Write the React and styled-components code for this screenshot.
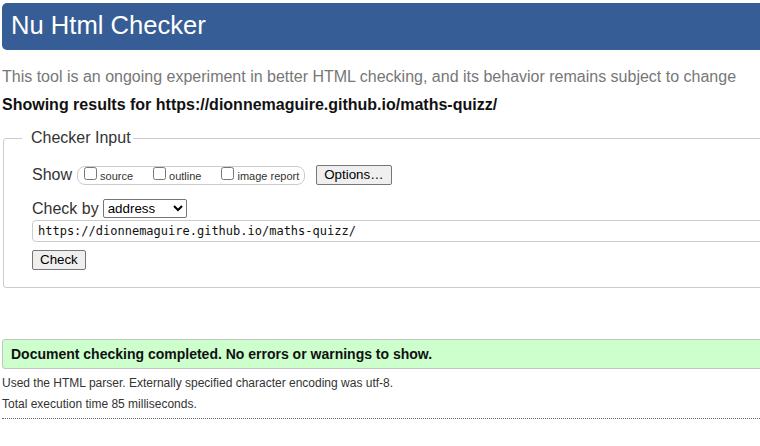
import React from 'react'
import styled, { createGlobalStyle } from 'styled-components'

const GlobalStyle = createGlobalStyle`
html, body {
  margin: 0;
  padding: 0;
  overflow: hidden;
  background: #fff;
}
body {
  font-family: "Liberation Sans", Arial, sans-serif;
  font-size: 16px;
  color: #222;
}
`

const Page = styled.div`
width: 820px;
padding: 3px 0 0 2px;
`

const Header = styled.h1`
box-sizing: border-box;
height: 47px;
margin: 0;
padding: 8px 0 0 9px;
background-color: #365d95;
border-radius: 5px 0 0 5px;
color: #fff;
font-weight: 400;
font-size: 25.6px;
line-height: 29px;
`

const Intro = styled.p`
margin: 18px 0 0 0;
line-height: 18px;
color: #777;
`

const Results = styled.p`
margin: 10px 0 0 0;
line-height: 18px;
font-weight: 700;
color: #111;
`

const Fieldset = styled.fieldset`
margin: 15px 0 0 1px;
padding: 18px 0 17px 28px;
border: 1px solid #ccc;
border-radius: 3px;
color: #333;
display: flex;
flex-direction: column;
`

const Legend = styled.legend`
margin-left: -10px;
padding: 0 2px 0 9px;
line-height: 18px;
font-size: 16px;
`

const Row = styled.div`
display: flex;
align-items: center;
height: ${p => p.$h}px;
margin-top: ${p => p.$gap || 0}px;
line-height: 18px;
`

const Label = styled.span`
margin-right: ${p => p.$space}px;
`

const Group = styled.div`
box-sizing: border-box;
display: flex;
align-items: flex-start;
gap: 16px;
height: 19px;
padding: 0 5px 1px 2px;
border: 1px solid #ccc;
border-radius: 8px;
margin-right: 11px;
`

const Option = styled.label`
display: flex;
align-items: flex-start;
font-size: 11px;
line-height: 13px;
color: #333;
`

const Checkbox = styled.input.attrs({ type: 'checkbox' })`
width: 13px;
height: 13px;
margin: 0 3px 0 4px;
`

const OptionText = styled.span`
padding-top: 3px;
`

const Button = styled.button`
box-sizing: border-box;
height: 20px;
padding: 1px 7px;
border: 1px solid #767676;
border-radius: 2px;
background: #efefef;
color: #000;
font-family: "Liberation Sans", Arial, sans-serif;
font-size: 13.333px;
line-height: 16px;
`

const Select = styled.select`
box-sizing: border-box;
width: 84px;
height: 19px;
font-family: "Liberation Sans", Arial, sans-serif;
font-size: 13.333px;
color: #000;
border: 1px solid #767676;
border-radius: 2px;
background: #fff;
`

const UrlInput = styled.input`
box-sizing: border-box;
width: 100%;
height: 22px;
padding: 0 5px;
border: 1px solid #ccc;
border-radius: 4px;
font-family: "DejaVu Sans Mono", "Liberation Mono", monospace;
font-size: 12px;
color: #111;
`

const Success = styled.div`
box-sizing: border-box;
height: 30px;
margin-top: 51px;
padding: 6px 8px;
background-color: #ccffcc;
border: 1px solid #c4c4c4;
border-radius: 3px 0 0 3px;
font-weight: 700;
font-size: 14px;
line-height: 16px;
color: #111;
`

const Note = styled.p`
margin: ${p => p.$top}px 0 0 0;
font-size: 12px;
line-height: 14px;
color: #333;
`

const Divider = styled.hr`
margin: 7px 0 0 0;
border: none;
border-top: 1px dotted #666;
height: 0;
`

const options = ['source', 'outline', 'image report']

export default function App() {
  return (
    <Page>
      <GlobalStyle />
      <Header>Nu Html Checker</Header>
      <Intro>This tool is an ongoing experiment in better HTML checking, and its behavior remains subject to change</Intro>
      <Results>Showing results for https://dionnemaguire.github.io/maths-quizz/</Results>

      <Fieldset>
        <Legend>Checker Input</Legend>
        <Row $h={20}>
          <Label $space={5}>Show</Label>
          <Group>
            {options.map(o => (
              <Option key={o}>
                <Checkbox />
                <OptionText>{o}</OptionText>
              </Option>
            ))}
          </Group>
          <Button type="button">Options…</Button>
        </Row>
        <Row $h={19} $gap={14}>
          <Label $space={4}>Check by</Label>
          <Select defaultValue="address">
            <option value="address">address</option>
            <option value="file">file upload</option>
            <option value="text">text input</option>
          </Select>
        </Row>
        <Row $h={22} $gap={2}>
          <UrlInput defaultValue="https://dionnemaguire.github.io/maths-quizz/" />
        </Row>
        <Row $h={20} $gap={8}>
          <Button type="button">Check</Button>
        </Row>
      </Fieldset>

      <Success>Document checking completed. No errors or warnings to show.</Success>
      <Note $top={7}>Used the HTML parser. Externally specified character encoding was utf-8.</Note>
      <Note $top={7}>Total execution time 85 milliseconds.</Note>
      <Divider />
    </Page>
  )
}
